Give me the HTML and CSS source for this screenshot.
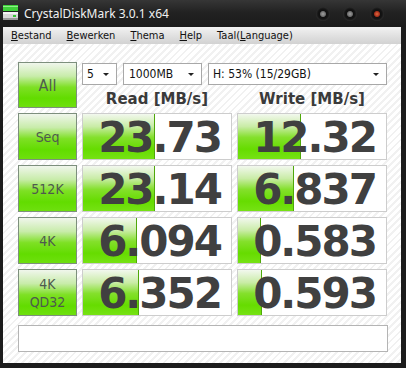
FILE: index.html
```html
<!DOCTYPE html>
<html lang="en">
<head>
  <meta charset="UTF-8">
  <meta name="viewport" content="width=device-width, initial-scale=1.0">
  <title>CrystalDiskMark 3.0.1 x64</title>
  <link rel="stylesheet" href="styles.css">
</head>
<body>
  <div class="window">
    <!-- Title bar: icon, caption, window buttons -->
    <div class="titlebar">
      <svg class="app-icon" width="18" height="18" viewBox="0 0 18 18">
        <rect x="1" y="1" width="15" height="6" fill="#3fcf3a"/>
        <rect x="1" y="2" width="15" height="1" fill="#8ef08a"/>
        <rect x="1" y="8" width="15" height="8" rx="1" fill="#d8d8d8"/>
        <rect x="1" y="8" width="15" height="2" fill="#f4f4f4"/>
        <rect x="1" y="14" width="15" height="2" fill="#9a9a9a"/>
        <rect x="11" y="11" width="3" height="2" fill="#35c535"/>
      </svg>
      <span class="title">CrystalDiskMark 3.0.1 x64</span>
      <div class="controls">
        <span class="ctl"></span>
        <span class="ctl"></span>
        <span class="ctl close"></span>
      </div>
    </div>

    <!-- Menu bar -->
    <div class="menubar">
      <span><u>B</u>estand</span>
      <span><u>B</u>ewerken</span>
      <span><u>T</u>hema</span>
      <span><u>H</u>elp</span>
      <span>Taal(<u>L</u>anguage)</span>
    </div>

    <div class="content">
      <div class="grid">
        <div class="test all">All</div>
        <div class="top">
          <div class="selects">
            <div class="combo count">5<i></i></div>
            <div class="combo size">1000MB<i></i></div>
            <div class="combo drive">H: 53% (15/29GB)<i></i></div>
          </div>
          <div class="heads">
            <div>Read [MB/s]</div>
            <div>Write [MB/s]</div>
          </div>
        </div>

        <div class="test seq">Seq</div>
        <div class="result"><span class="bar" style="width: 71px"></span><span class="num">23.73</span></div>
        <div class="result"><span class="bar" style="width: 62px"></span><span class="num">12.32</span></div>

        <div class="test">512K</div>
        <div class="result"><span class="bar" style="width: 71px"></span><span class="num">23.14</span></div>
        <div class="result"><span class="bar" style="width: 55px"></span><span class="num">6.837</span></div>

        <div class="test">4K</div>
        <div class="result"><span class="bar" style="width: 53px"></span><span class="num">6.094</span></div>
        <div class="result"><span class="bar" style="width: 22px"></span><span class="num">0.583</span></div>

        <div class="test two">4K<br>QD32</div>
        <div class="result"><span class="bar" style="width: 55px"></span><span class="num">6.352</span></div>
        <div class="result"><span class="bar" style="width: 23px"></span><span class="num">0.593</span></div>
      </div>

      <div class="status"></div>
    </div>
  </div>
</body>
</html>
```

FILE: styles.css
```css
/* Window chrome is dark, the client area is white with faint stripes. */
html, body {
  margin: 0;
  padding: 0;
}
body {
  background: #1b1b1b;
  font-family: "DejaVu Sans Condensed", "DejaVu Sans", sans-serif;
}

.window {
  width: 406px;
  height: 368px;
  display: flex;
  flex-direction: column;
  background: #1c1c1c;
}

/* Title bar */
.titlebar {
  height: 27px;
  display: flex;
  align-items: center;
  background: linear-gradient(#363636, #222 45%, #1a1a1a);
  padding-left: 2px;
  box-sizing: border-box;
}
.app-icon {
  flex: none;
  margin-top: -1px;
}
.title {
  margin-left: 4px;
  color: #f0f0f0;
  font-family: "Noto Sans", "DejaVu Sans", sans-serif;
  font-size: 12px;
}
.controls {
  margin-left: auto;
  margin-right: 22px;
  display: flex;
  gap: 13px;
}
.ctl {
  width: 14px;
  height: 14px;
  border-radius: 50%;
  background: radial-gradient(circle at 50% 50%, #a0a0a0 0, #6e6e6e 2.5px, #111 3.5px, #141414 5px, #2c2c2c 7px);
}
.ctl.close {
  background: radial-gradient(circle at 50% 50%, #e06a40 0, #a8301c 2.5px, #111 3.5px, #141414 5px, #2c2c2c 7px);
}

/* Menu bar */
.menubar {
  height: 17px;
  margin: 0 5px 0 3px;
  background: linear-gradient(#f2f2f2, #dedede 60%, #d2d2d2);
  display: flex;
  align-items: center;
  gap: 15px;
  padding-left: 8px;
  font-size: 11px;
  color: #111;
}

/* Client area */
.content {
  flex: 1;
  margin: 0 5px 5px 3px;
  padding: 18px 0 0 15px;
  background: #fff repeating-linear-gradient(135deg, #fff 0, #fff 3px, #f1f1f1 3px, #f1f1f1 5px);
  box-sizing: border-box;
}

.grid {
  display: grid;
  grid-template-columns: 59px 150px 150px;
  grid-template-rows: 46px repeat(4, 47px);
  column-gap: 5px;
  row-gap: 5px;
}

/* Green test buttons on the left */
.test {
  border: 1px solid #7d8f7d;
  background: linear-gradient(#f0f6ec, #c8ecaa 30%, #7ee024 55%, #62dc00 80%, #6ee00e);
  display: flex;
  align-items: center;
  justify-content: center;
  text-align: center;
  color: #4e5a4e;
  font-size: 14px;
  box-sizing: border-box;
}
.test.all {
  font-size: 16px;
}
.test.two {
  line-height: 18px;
}

/* Combos and column headers */
.top {
  grid-column: 2 / span 2;
  display: flex;
  flex-direction: column;
}
.selects {
  display: flex;
  gap: 6px;
  margin-top: 1px;
}
.combo {
  height: 22px;
  border: 1px solid #a8a8a8;
  background: #fff;
  box-sizing: border-box;
  display: flex;
  align-items: center;
  padding-left: 4px;
  font-size: 12px;
  color: #111;
}
.combo i {
  margin-left: auto;
  margin-right: 7px;
  width: 0;
  height: 0;
  border-left: 3px solid transparent;
  border-right: 3px solid transparent;
  border-top: 3px solid #222;
}
.combo.count { width: 35px; }
.combo.size { width: 79px; padding-left: 5px; }
.combo.drive { width: 179px; }

.heads {
  flex: 1;
  display: grid;
  grid-template-columns: 150px 150px;
  column-gap: 5px;
  align-items: end;
}
.heads div {
  text-align: center;
  font-family: "DejaVu Sans", sans-serif;
  font-weight: bold;
  font-size: 15px;
  color: #3a3a3a;
  line-height: 18px;
}

/* Result boxes with a bar behind the number */
.result {
  position: relative;
  border: 1px solid #cdcdcd;
  background: #fff;
  box-sizing: border-box;
  display: flex;
  align-items: center;
  justify-content: flex-end;
  padding-right: 8px;
}
.bar {
  position: absolute;
  left: 0;
  top: 0;
  bottom: 0;
  background: linear-gradient(#f2f8ee, #c9eca6 28%, #84e02c 52%, #66dc00 78%, #76e214);
  border-right: 1px solid #4fa80a;
}
.num {
  position: relative;
  font-family: "DejaVu Sans", sans-serif;
  font-weight: bold;
  font-size: 42px;
  letter-spacing: -2px;
  color: #404040;
  line-height: 45px;
  margin-top: 2px;
  padding-right: 2px;
}

.status {
  margin-top: 9px;
  width: 370px;
  height: 27px;
  border: 1px solid #b4b4b4;
  background: #fff;
  box-sizing: border-box;
}
```
